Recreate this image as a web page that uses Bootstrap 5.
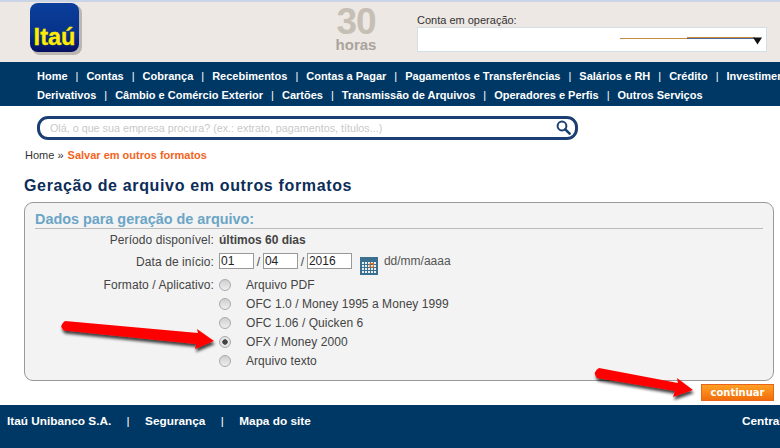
<!DOCTYPE html>
<html lang="pt-BR">
<head>
<meta charset="utf-8">
<title>Itaú</title>
<link href="https://cdn.jsdelivr.net/npm/bootstrap@5.3.0/dist/css/bootstrap.min.css" rel="stylesheet">
<style>
html,body{height:100%;}
body{font-family:"Liberation Sans",Arial,sans-serif;font-size:12px;color:#444;background:#fff;width:780px;height:448px;overflow:hidden;position:relative;}
.page-wrap{height:448px;}
.top-head{height:62px;background:#ede8e4;border-top:2px solid #c9d5e6;padding-left:30px;}
.logo-box{width:52px;height:52px;margin-top:1px;flex:none;}
.years-box{width:44px;height:48px;margin-left:252px;margin-top:3px;flex:none;}
.years-num{font-size:37px;font-weight:700;line-height:34px;letter-spacing:-1px;color:#c6bfb5;text-align:center;}
.years-txt{font-size:15px;font-weight:700;line-height:12px;color:#aaa39c;text-align:center;}
.acct-box{margin-left:39px;width:350px;padding-top:12px;font-size:11px;color:#333;flex:none;}
.acct-label{line-height:13px;}
.acct-field{width:350px;height:25px;background:#fff;border:1px solid #d3dfe6;position:relative;}
.acct-field svg{position:absolute;left:0;top:0;}
.main-nav{height:44px;background:#003865;padding:5px 0 0 37px;overflow:hidden;white-space:nowrap;color:#fff;font-weight:700;font-size:11px;}
.nav-line{line-height:19px;}
.nav-line a{color:#fff;text-decoration:none;}
.nav-line i{font-style:normal;font-weight:400;margin:0 8px;}
.search-pill{width:541px;height:24px;margin:10px 0 0 37px;border:3px solid #1c3f73;border-radius:11px;background:#fff;padding:0 4px 0 10px;}
.search-pill span{color:#c9c9c9;font-size:10.75px;}
.crumbs{margin:8px 0 0 25px;font-size:11px;line-height:14px;color:#333;}
.crumbs b{color:#f26522;font-size:11px;margin-left:1px;}
.page-title{font-size:16px;font-weight:700;color:#0c2d58;letter-spacing:.65px;margin:14px 0 0 24px;line-height:19px;}
.data-panel{width:750px;height:180px;margin:7px 0 0 24px;background:#f3f3f3;border:1px solid #999;border-radius:9px;padding:8px 10px 0;}
.data-legend{font-size:14.4px;font-weight:700;color:#6ba5c6;line-height:17px;border-bottom:1px solid #bbb;height:18px;}
.form-line{display:flex;}
.form-key{width:182px;text-align:right;color:#444;padding-right:3px;flex:none;letter-spacing:.08px;}
.form-val{margin-left:2px;color:#444;}
.line-a{margin-top:2px;height:18px;}
.line-b{margin-top:4px;height:23px;}
.slash{margin:0 2.8px;}
.date-in{height:16px;width:35px;border:1px solid #999;background:#fff;padding:0 1px;font:12px "Liberation Sans",sans-serif;color:#222;border-radius:0;}
.date-first{margin-left:2px;}
.date-y{width:45px;}
.cal-icon{margin-left:8px;margin-top:4px;flex:none;}
.date-hint{margin-left:6px;margin-top:-1px;color:#555;}
.opt-line{height:19px;display:flex;align-items:center;}
.opt-radio{appearance:none;width:12px;height:12px;margin:0 0 0 2px;border:1px solid #aaa;border-radius:50%;background:linear-gradient(#cfcfcf,#eee);flex:none;}
.opt-radio:checked{background:radial-gradient(circle,#444 0 2.4px,#e5e5e5 3px);}
.opt-text{margin-left:15px;color:#444;letter-spacing:.06px;}
.go-line{width:750px;margin:3px 0 0 24px;height:21px;}
.go-btn{width:73px;height:17px;border:1px solid #e8641b;background:linear-gradient(#ffa024,#f26d0c);color:#fff;font:700 10px "DejaVu Sans",sans-serif;line-height:14px;padding:0;border-radius:0;}
.foot-bar{height:43px;background:#003865;color:#fff;font-weight:700;font-size:11.8px;padding:8px 0 0 7px;white-space:nowrap;overflow:hidden;}
.foot-left{width:735px;flex:none;}
.foot-bar i{font-style:normal;font-weight:400;margin:0 15.4px;}
.arrows{position:absolute;left:0;top:0;pointer-events:none;}
</style>
</head>
<body>
<div class="page-wrap d-flex flex-column">
  <div class="top-head d-flex">
    <svg class="logo-box" viewBox="0 0 52 52" aria-label="Itaú">
      <defs>
        <linearGradient id="lg" x1="0" y1="0" x2="0" y2="1"><stop offset="0" stop-color="#0a3f9c"/><stop offset=".6" stop-color="#07338a"/><stop offset="1" stop-color="#050f5e"/></linearGradient>
      </defs>
      <rect x="2" y="2" width="50" height="50" rx="8" fill="#bbb6b0"/>
      <rect x="0" y="0" width="49" height="49" rx="8" fill="url(#lg)"/>
      <text x="24.5" y="41.5" text-anchor="middle" font-family="Liberation Sans" font-weight="700" font-size="23.5" fill="#ffec00" stroke="#ffec00" stroke-width=".3">Itaú</text>
    </svg>
    <div class="years-box">
      <div class="years-num">30</div>
      <div class="years-txt">horas</div>
    </div>
    <div class="acct-box">
      <div class="acct-label">Conta em operação:</div>
      <div class="acct-field">
        <svg width="348" height="23" viewBox="0 0 348 23"><path d="M202 10.5H270" stroke="#c98a3c" fill="none"/><path d="M269 9.5H337" stroke="#c98a3c" fill="none"/><path d="M269 10.5H337" stroke="#4a6a9c" fill="none"/><path d="M335 9.5h9l-4.5 7z" fill="#111"/></svg>
      </div>
    </div>
  </div>
  <nav class="main-nav">
    <div class="nav-line"><a href="#">Home</a><i>|</i><a href="#">Contas</a><i>|</i><a href="#">Cobrança</a><i>|</i><a href="#">Recebimentos</a><i>|</i><a href="#">Contas a Pagar</a><i>|</i><a href="#">Pagamentos e Transferências</a><i>|</i><a href="#">Salários e RH</a><i>|</i><a href="#">Crédito</a><i>|</i><a href="#">Investimentos</a></div>
    <div class="nav-line"><a href="#">Derivativos</a><i>|</i><a href="#">Câmbio e Comércio Exterior</a><i>|</i><a href="#">Cartões</a><i>|</i><a href="#">Transmissão de Arquivos</a><i>|</i><a href="#">Operadores e Perfis</a><i>|</i><a href="#">Outros Serviços</a></div>
  </nav>
  <div class="search-pill d-flex align-items-center justify-content-between">
    <span>Olá, o que sua empresa procura? (ex.: extrato, pagamentos, títulos...)</span>
    <svg width="15" height="15" viewBox="0 0 15 15"><circle cx="6" cy="6" r="4.4" fill="none" stroke="#1c3f73" stroke-width="2"/><path d="M9.3 9.3L13.6 13.6" stroke="#1c3f73" stroke-width="2.6" stroke-linecap="round"/></svg>
  </div>
  <div class="crumbs">Home » <b>Salvar em outros formatos</b></div>
  <h1 class="page-title">Geração de arquivo em outros formatos</h1>
  <div class="data-panel">
    <div class="data-legend">Dados para geração de arquivo:</div>
    <div class="form-line line-a"><div class="form-key">Período disponível:</div><b class="form-val">últimos 60 dias</b></div>
    <div class="form-line line-b">
      <div class="form-key">Data de início:</div>
      <input class="date-in date-first" type="text" value="01"><span class="slash">/</span><input class="date-in" type="text" value="04"><span class="slash">/</span><input class="date-in date-y" type="text" value="2016">
      <svg class="cal-icon" width="18" height="18" viewBox="0 0 18 18"><rect width="18" height="18" fill="#3a6f8f"/><rect x="2" y="5" width="14" height="11" fill="#e8f0f4"/><path d="M4.5 5v11M7.5 5v11M10.5 5v11M13.5 5v11M2 7.5h14M2 10.5h14M2 13.5h14" stroke="#3a6f8f" stroke-width="1"/><rect x="10" y="6.5" width="3.5" height="3.5" fill="none" stroke="#e8731a"/></svg>
      <span class="date-hint">dd/mm/aaaa</span>
    </div>
    <div class="opt-line"><div class="form-key">Formato / Aplicativo:</div><input class="opt-radio" type="radio" name="fmt"><span class="opt-text">Arquivo PDF</span></div>
    <div class="opt-line"><div class="form-key"></div><input class="opt-radio" type="radio" name="fmt"><span class="opt-text">OFC 1.0 / Money 1995 a Money 1999</span></div>
    <div class="opt-line"><div class="form-key"></div><input class="opt-radio" type="radio" name="fmt"><span class="opt-text">OFC 1.06 / Quicken 6</span></div>
    <div class="opt-line"><div class="form-key"></div><input class="opt-radio" type="radio" name="fmt" checked><span class="opt-text">OFX / Money 2000</span></div>
    <div class="opt-line"><div class="form-key"></div><input class="opt-radio" type="radio" name="fmt"><span class="opt-text">Arquivo texto</span></div>
  </div>
  <div class="go-line d-flex justify-content-end"><button class="go-btn" type="button">continuar</button></div>
  <footer class="foot-bar d-flex">
    <div class="foot-left">Itaú Unibanco S.A.<i>|</i>Segurança<i>|</i>Mapa do site</div>
    <div>Central de Atendimento</div>
  </footer>
</div>
<svg class="arrows" width="780" height="448" viewBox="0 0 780 448">
  <defs><filter id="sh" x="-20%" y="-50%" width="140%" height="200%"><feDropShadow dx="1" dy="3" stdDeviation="1.5" flood-color="#000" flood-opacity=".75"/></filter></defs>
  <path d="M65 321 L198 333 L197 329 L214 341 L195 349 L196 344 L64 330.5 Q58 326 65 321Z" fill="#f00" filter="url(#sh)"/>
  <path d="M599 368 L678 383 L677 378 L693 390 L673 397 L675 391 L597 378 Q592 372 599 368Z" fill="#f00" filter="url(#sh)"/>
</svg>
<script src="https://cdn.jsdelivr.net/npm/bootstrap@5.3.0/dist/js/bootstrap.bundle.min.js"></script>
</body>
</html>
